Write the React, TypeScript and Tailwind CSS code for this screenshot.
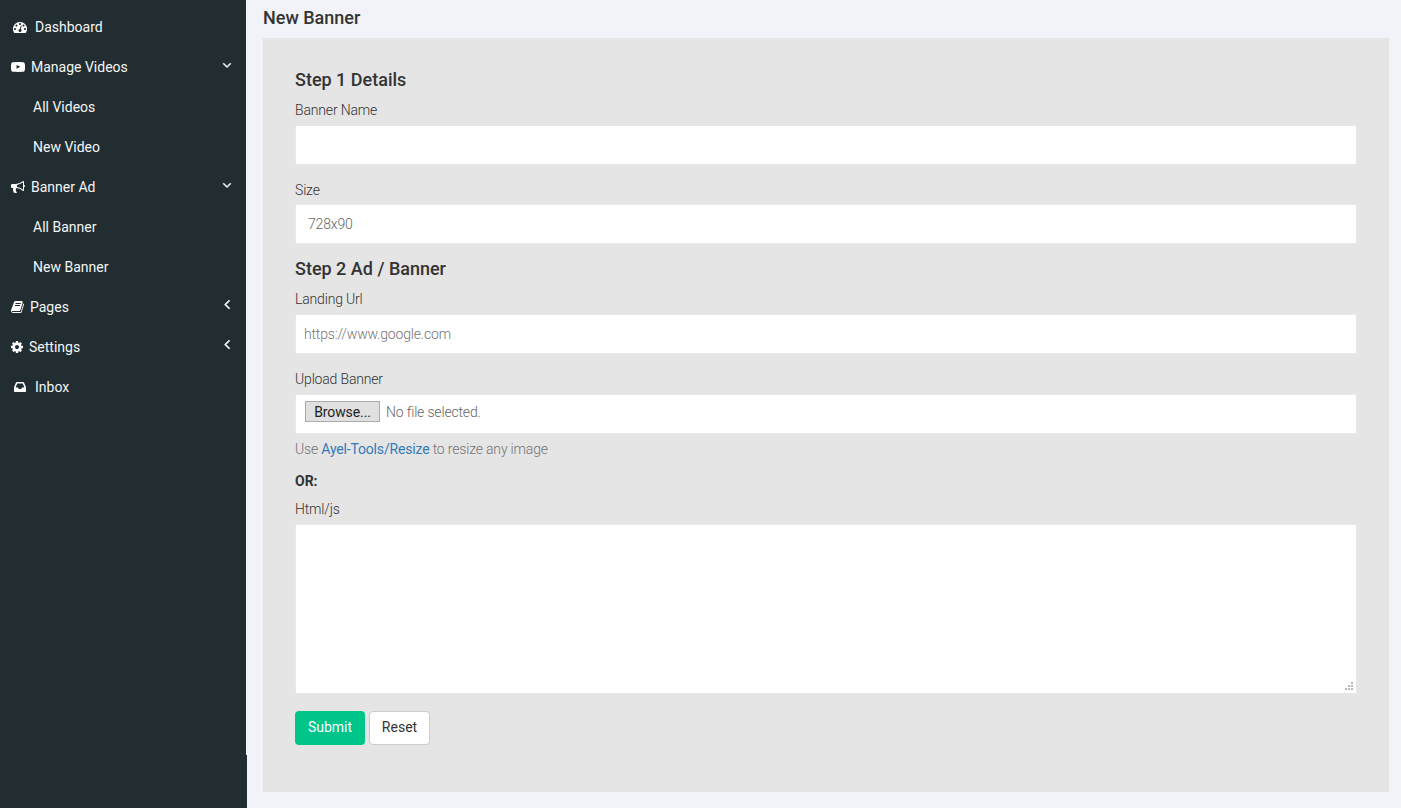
import React from "react";

const ICONS = {
  dashboard:
    "M384 1152q0-53-37.5-90.5t-90.5-37.5-90.5 37.5-37.5 90.5 37.5 90.5 90.5 37.5 90.5-37.5 37.5-90.5zm192-448q0-53-37.5-90.5t-90.5-37.5-90.5 37.5-37.5 90.5 37.5 90.5 90.5 37.5 90.5-37.5 37.5-90.5zm428 481l101-382q6-26-7.5-48.5t-38.5-29.5-48 6.5-30 39.5l-101 382q-60 5-107 43.5t-63 98.5q-20 77 20 146t117 89 146-20 89-117q16-60-6-117t-72-91zm660-33q0-53-37.5-90.5t-90.5-37.5-90.5 37.5-37.5 90.5 37.5 90.5 90.5 37.5 90.5-37.5 37.5-90.5zm-640-640q0-53-37.5-90.5t-90.5-37.5-90.5 37.5-37.5 90.5 37.5 90.5 90.5 37.5 90.5-37.5 37.5-90.5zm448 192q0-53-37.5-90.5t-90.5-37.5-90.5 37.5-37.5 90.5 37.5 90.5 90.5 37.5 90.5-37.5 37.5-90.5zm320 448q0 261-141 483-19 29-54 29h-1402q-35 0-54-29-141-221-141-483 0-182 71-348t191-286 286-191 348-71 348 71 286 191 191 286 71 348z",
  video:
    "M711 1128l484-250-484-253v503zm185-862q168 0 324.5 4.5t229.5 9.5l73 4q1 0 17 1.5t23 3 23.5 4.5 28.5 8 28 13 31 19.5 29 26.5q6 6 15.5 18.5t29 58.5 26.5 101q8 64 12.5 136.5t5.5 113.5v176q1 145-18 290-7 55-25 99.5t-32 61.5l-14 17q-14 15-29 26.5t-31 19-28 12.5-28.5 8-24 4.5-23 3-16.5 1.5q-251 19-627 19-207-2-359.5-6.5t-200.5-7.5l-49-4-36-4q-36-5-54.5-10t-51-21-56.5-41q-6-6-15.5-18.5t-29-58.5-26.5-101q-8-64-12.5-136.5t-5.5-113.5v-176q-1-145 18-290 7-55 25-99.5t32-61.5l14-17q14-15 29-26.5t31-19.5 28-13 28.5-8 23.5-4.5 23-3 17-1.5q251-18 627-18z",
  bullhorn:
    "M1664 640q53 0 90.5 37.5t37.5 90.5-37.5 90.5-90.5 37.5v384q0 52-38 90t-90 38q-417-347-812-380-58 19-91 66t-31 100.5 40 92.5q-20 33-23 65.5t6 58 33.5 55 48 50 61.5 50.5q-29 58-111.5 83t-168.5 11.5-132-55.5q-7-23-29.5-87.5t-32-94.5-23-89-15-101 3.5-98.5 22-110.5h-122q-66 0-113-47t-47-113v-192q0-66 47-113t113-47h480q435 0 896-384 52 0 90 38t38 90v384zm-128 604v-954q-394 302-768 343v270q377 42 768 341z",
  book:
    "M1639 478q40 57 18 129l-275 906q-19 64-76.5 107.5t-122.5 43.5h-923q-77 0-148.5-53.5t-99.5-131.5q-24-67-2-127 0-4 3-27t4-37q1-8-3-21.5t-3-19.5q2-11 8-21t16.5-23.5 16.5-23.5q23-38 45-91.5t30-91.5q3-10 .5-30t-.5-28q3-11 17-28t17-23q21-36 42-92t25-90q1-9-2.5-32t.5-28q4-13 22-30.5t22-22.5q19-26 42.5-84.5t27.5-96.5q1-8-3-25.5t-2-26.5q2-8 9-18t18-23 17-21q8-12 16.5-30.5t15-35 16-36 19.5-32 26.5-23.5 36-11.5 47.5 5.5l-1 3q38-9 51-9h761q74 0 114 56t18 130l-274 906q-36 119-71.5 153.5t-128.5 34.5h-869q-27 0-38 15-11 16-1 43 24 70 144 70h923q29 0 56-15.5t35-41.5l300-987q7-22 5-57 38 15 59 43zm-1064 2q-4 13 2 22.5t20 9.5h608q13 0 25.5-9.5t16.5-22.5l21-64q4-13-2-22.5t-20-9.5h-608q-13 0-25.5 9.5t-16.5 22.5zm-83 256q-4 13 2 22.5t20 9.5h608q13 0 25.5-9.5t16.5-22.5l21-64q4-13-2-22.5t-20-9.5h-608q-13 0-25.5 9.5t-16.5 22.5z",
  gear:
    "M1152 896q0-106-75-181t-181-75-181 75-75 181 75 181 181 75 181-75 75-181zm512-109v222q0 12-8 23t-20 13l-185 28q-19 54-39 91 35 50 107 138 10 12 10 25t-9 23q-27 37-99 108t-94 71q-12 0-26-9l-138-108q-44 23-91 38-16 136-29 186-7 28-36 28h-222q-14 0-24.5-8.5t-11.5-21.5l-28-184q-49-16-90-37l-141 107q-10 9-25 9-14 0-25-11-126-114-165-168-7-10-7-23 0-12 8-23 15-21 51-66.5t54-70.5q-27-50-41-99l-183-27q-13-2-21-12.5t-8-23.5v-222q0-12 8-23t19-13l186-28q14-46 39-92-40-57-107-138-10-12-10-24 0-10 9-23 26-36 98.5-107.5t94.5-71.5q13 0 26 10l138 107q44-23 91-38 16-136 29-186 7-28 36-28h222q14 0 24.5 8.5t11.5 21.5l28 184q49 16 90 37l142-107q9-9 24-9 13 0 25 10 129 119 165 170 7 8 7 22 0 12-8 23-15 21-51 66.5t-54 70.5q26 50 41 98l183 28q13 2 21 12.5t8 23.5z",
  inbox:
    "M1151 960h316q-1-3-2.5-8.5t-2.5-7.5l-212-496h-708l-212 496q-1 3-2.5 8.5t-2.5 7.5h316l95 192h320zm513 30v482q0 26-19 45t-45 19h-1408q-26 0-45-19t-19-45v-482q0-62 25-123l238-552q10-25 36.5-42t52.5-17h832q26 0 52.5 17t36.5 42l238 552q25 61 25 123z",
  down: "M1395 736q0 13-10 23l-466 466q-10 10-23 10t-23-10l-466-466q-10-10-10-23t10-23l50-50q10-10 23-10t23 10l393 393 393-393q10-10 23-10t23 10l50 50q10 10 10 23z",
  left: "M1203 544q0 13-10 23l-393 393 393 393q10 10 10 23t-10 23l-50 50q-10 10-23 10t-23-10l-466-466q-10-10-10-23t10-23l466-466q10-10 23-10t23 10l50 50q10 10 10 23z",
};

const Icon = ({ name, className }: { name: keyof typeof ICONS; className?: string }) => (
  <svg viewBox="0 0 1792 1792" fill="currentColor" className={`h-[14px] w-[14px] shrink-0 ${className ?? ""}`}>
    <path d={ICONS[name]} />
  </svg>
);

const labelClass = "block h-5 text-sm leading-5 tracking-[-0.17px] text-[#333] font-light";
const fieldClass = "w-full h-10 bg-white border border-[#e8e8e8] text-sm text-[#555] tracking-[-0.17px] outline-none";

const NavRow = ({ icon, iconClass, label, gap, chevron }: { icon: keyof typeof ICONS; iconClass: string; label: string; gap: string; chevron?: "down" | "left" }) => (
  <div className="flex h-10 items-center pl-[11px] text-[14px] text-[#f4f6f6]">
    <Icon name={icon} className={`text-white ${iconClass}`} />
    <span className={gap}>{label}</span>
    {chevron === "down" && <Icon name="down" className="ml-auto mb-[5px] mr-[13px] stroke-current stroke-[70]" />}
    {chevron === "left" && <Icon name="left" className="ml-auto mb-[6px] mr-[12px] h-[16px] w-[16px] stroke-current stroke-[70]" />}
  </div>
);

const SubRow = ({ label }: { label: string }) => (
  <div className="flex h-10 items-center pl-[33px] text-[14px] text-[#f4f6f6]">{label}</div>
);

const App = () => {
  return (
    <div className="relative flex h-[808px] overflow-hidden bg-[#f1f3f8] font-['Roboto',sans-serif]">
      <aside className="w-[247px] shrink-0 bg-[#222d32] pt-[7px]">
        <NavRow icon="dashboard" iconClass="ml-[2px]" label="Dashboard" gap="ml-[8px]" />
        <NavRow icon="video" iconClass="" label="Manage Videos" gap="ml-[6px]" chevron="down" />
        <SubRow label="All Videos" />
        <SubRow label="New Video" />
        <NavRow icon="bullhorn" iconClass="" label="Banner Ad" gap="ml-[6px]" chevron="down" />
        <SubRow label="All Banner" />
        <SubRow label="New Banner" />
        <NavRow icon="book" iconClass="ml-[-0.5px]" label="Pages" gap="ml-[5.5px]" chevron="left" />
        <NavRow icon="gear" iconClass="ml-[-1px]" label="Settings" gap="ml-[5px]" chevron="left" />
        <NavRow icon="inbox" iconClass="ml-[2px]" label="Inbox" gap="ml-[8px]" />
      </aside>
      <div className="absolute left-[246px] top-0 h-[755px] w-px bg-[#f1f3f8]" />

      <main className="flex-1 pl-[16px] pr-[12px]">
        <h1 className="h-[38px] pt-[7px] text-[18px] font-medium leading-[21px] text-[#333]">New Banner</h1>
        <div className="h-[754px] bg-[#e5e5e5] px-[32px] pt-[32px]">
          <h2 className="text-[18px] font-medium leading-5 text-[#333]">Step 1 Details</h2>
          <label className={`${labelClass} mt-[10px]`}>Banner Name</label>
          <input className={`${fieldClass} mt-[5px] px-3`} />

          <label className={`${labelClass} mt-[15px]`}>Size</label>
          <div className={`${fieldClass} mt-[4px] flex items-center pl-[12px] text-[#666] font-light`}>728x90</div>

          <h2 className="mt-[15px] text-[18px] font-medium leading-5 text-[#333]">Step 2 Ad / Banner</h2>
          <label className={`${labelClass} mt-[10px]`}>Landing Url</label>
          <input
            className={`${fieldClass} mt-[5px] px-2 font-light placeholder:text-[#757575]`}
            placeholder="https://www.google.com"
          />

          <label className={`${labelClass} mt-[15px]`}>Upload Banner</label>
          <div className={`${fieldClass} mt-[5px] flex items-center pb-[5px] pl-[9px] font-light text-[#666]`}>
            <button className="h-[21px] w-[75px] border border-[#ababab] bg-[#e0e0e0] text-sm leading-[18px] font-normal tracking-[-0.1px] text-[#222]">
              Browse...
            </button>
            <span className="ml-[6px]">No file selected.</span>
          </div>
          <p className="mt-[5px] h-5 text-sm leading-5 tracking-[-0.17px] font-light text-[#737373]">
            Use <a className="font-normal text-[#337ab7]">Ayel-Tools/Resize</a> to resize any image
          </p>

          <p className="mt-[12px] h-5 text-sm leading-5 font-bold text-[#333]">OR:</p>
          <label className={`${labelClass} mt-[8px]`}>Html/js</label>
          <div className="relative mt-[5px]">
            <textarea className={`${fieldClass} block !h-[170px] resize-none p-2`} />
            <svg viewBox="0 0 9 9" className="absolute bottom-[3px] right-[3px] h-[9px] w-[9px]" fill="#b5b5b5">
              <rect x="6" y="0" width="2" height="2" />
              <rect x="3" y="3" width="2" height="2" />
              <rect x="6" y="3" width="2" height="2" />
              <rect x="0" y="6" width="2" height="2" />
              <rect x="3" y="6" width="2" height="2" />
              <rect x="6" y="6" width="2" height="2" />
            </svg>
          </div>

          <div className="mt-[17px] flex gap-[4px]">
            <button className="h-[34px] w-[70px] rounded-[4px] bg-[#00c58a] pb-[2px] text-sm text-white">Submit</button>
            <button className="h-[34px] w-[61px] rounded-[4px] border border-[#ccc] bg-white pb-[2px] text-sm text-[#333]">Reset</button>
          </div>
        </div>
      </main>
    </div>
  );
};

export default App;
